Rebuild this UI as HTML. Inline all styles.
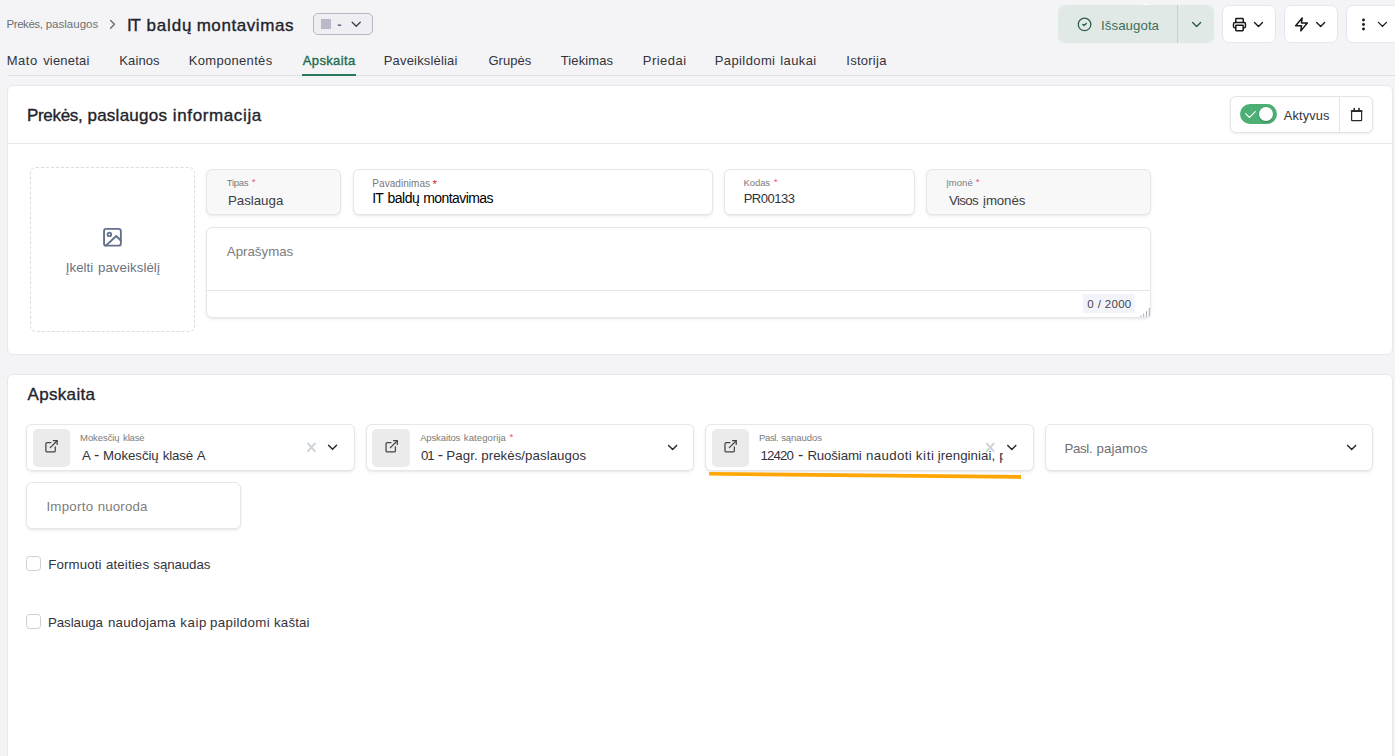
<!DOCTYPE html>
<html lang="lt">
<head>
<meta charset="utf-8">
<title>IT baldų montavimas</title>
<style>
html,body{margin:0;padding:0}
html{width:1395px;height:756px;overflow:hidden;background:#f4f4f7}
body{width:1395px;height:756px;overflow:hidden;background:#f4f4f7;font-family:"Liberation Sans",sans-serif;position:relative}
div,svg{box-sizing:border-box}
.page{position:absolute;left:0;top:0;width:1395px;height:756px;overflow:hidden;background:#f4f4f7}
.a{position:absolute}
.t{position:absolute;white-space:nowrap;line-height:1;font-weight:400}
.sw{-webkit-text-stroke:0.35px currentColor}
.b{font-weight:700}
.w{position:relative}
.clip{overflow:hidden;padding-top:4px}
.card{position:absolute;background:#fff;border:1px solid #e8e8eb;border-radius:6px}
.fld{position:absolute;background:#fff;border:1px solid #e7e7e8;border-radius:6px;box-shadow:0 1px 2px rgba(0,0,0,.06),0 2px 4px rgba(0,0,0,.04)}
.fld.dis{background:#f8f8f8}
.ib{position:absolute;background:#ebebeb;border-radius:5px}
.btn{position:absolute;background:#fff;border:1px solid #e3e6f1;border-radius:7px}
.ic{position:absolute;overflow:visible;stroke-linecap:round;stroke-linejoin:round}
.cb{position:absolute;width:15px;height:15px;background:#fff;border:1px solid #cfcfd1;border-radius:3.5px}
</style>
</head>
<body>
<div class="page">

<!-- ===== top bar ===== -->
<svg class="ic" fill="none" style="left:104px;top:16px" width="15.6" height="15.6" viewBox="-1.154 -0.846 24 24" stroke="#707074" stroke-width="2.3"><polyline points="9 18 15 12 9 6"/></svg>

<div class="a" style="left:313px;top:13px;width:60px;height:22px;background:#eeeef3;border:1px solid #b7b7c6;border-radius:5px"></div>
<div class="a" style="left:321px;top:19px;width:10px;height:10px;background:#b9b9c9"></div>
<svg class="ic" fill="none" style="left:348px;top:16px" width="16" height="16" viewBox="-0.300 -0.450 24 24" stroke="#3f3f46" stroke-width="2"><polyline points="6 9 12 15 18 9"/></svg>

<div class="a" style="left:7px;top:75px;width:1388px;height:1px;background:#e1e1e5"></div>
<div class="a" style="left:302px;top:74px;width:54px;height:2px;background:#2a7a5b"></div>

<!-- saved button -->
<div class="a" style="left:1143px;top:4px;width:4px;height:1px;background:#fff"></div>
<div class="a" style="left:1066px;top:4px;width:2px;height:1px;background:#fbfbfc"></div>
<div class="a" style="left:1058px;top:5px;width:156px;height:38px;background:#e0e9e6;border-radius:7px"></div>
<div class="a" style="left:1177px;top:5px;width:1px;height:38px;background:#c2d2cc"></div>
<svg class="ic" fill="none" style="left:1076px;top:16px" width="16" height="16" viewBox="-0.825 -0.600 24 24" stroke="#2c5e4a"><circle cx="12" cy="12" r="9.4" stroke-width="1.9"/><polyline points="9.4 12.2 11.1 13.6 14.6 10.6" stroke-width="2.2"/></svg>
<svg class="ic" fill="none" style="left:1188px;top:16px" width="16" height="16" viewBox="-0.975 -0.750 24 24" stroke="#2c5e4a" stroke-width="2"><polyline points="6 9 12 15 18 9"/></svg>

<!-- print -->
<div class="btn" style="left:1222px;top:5px;width:54px;height:38px"></div>
<svg class="ic" fill="none" style="left:1231px;top:16px" width="16" height="16" viewBox="-0.750 -0.825 24 24" stroke="#17171a" stroke-width="2.2"><path d="M17.6 17h1.4a2 2 0 0 0 2-2v-4a2 2 0 0 0-2-2H5a2 2 0 0 0-2 2v4a2 2 0 0 0 2 2h1.4"/><path d="M17.6 9V4a1 1 0 0 0-1-1H7.400a1 1 0 0 0-1 1v5"/><rect x="6.4" y="13" width="11.2" height="8.2" rx="1"/></svg>
<svg class="ic" fill="none" style="left:1250px;top:16px" width="16" height="16" viewBox="-0.750 -0.675 24 24" stroke="#17171a" stroke-width="2"><polyline points="6 9 12 15 18 9"/></svg>

<!-- bolt -->
<div class="btn" style="left:1284px;top:5px;width:54px;height:38px"></div>
<svg class="ic" fill="none" style="left:1293px;top:16px" width="15.6" height="15.6" viewBox="-1.077 -0.923 24 24" stroke="#17171a" stroke-width="2.3"><polygon points="13 2 3 14 12 14 11 22 21 10 12 10 13 2"/></svg>
<svg class="ic" fill="none" style="left:1312px;top:16px" width="16" height="16" viewBox="-0.975 -0.675 24 24" stroke="#17171a" stroke-width="2"><polyline points="6 9 12 15 18 9"/></svg>

<!-- more -->
<div class="btn" style="left:1346px;top:5px;width:54px;height:38px"></div>
<svg class="ic" style="left:1355px;top:16px" width="16" height="16" viewBox="-0.500 -0.500 16 16" stroke="none" fill="#17171a"><circle cx="8" cy="3.5" r="1.42"/><circle cx="8" cy="8" r="1.42"/><circle cx="8" cy="12.5" r="1.42"/></svg>
<svg class="ic" fill="none" style="left:1374px;top:16px" width="16" height="16" viewBox="-0.675 -0.600 24 24" stroke="#17171a" stroke-width="2"><polyline points="6 9 12 15 18 9"/></svg>

<!-- ===== card 1 ===== -->
<div class="card" style="left:7px;top:85px;width:1386px;height:270px"></div>
<div class="a" style="left:8px;top:143px;width:1384px;height:1px;background:#e8e8ea"></div>

<!-- active toggle group -->
<div class="a" style="left:1230px;top:96px;width:143px;height:37px;background:#fff;border:1px solid #e4e4e6;border-radius:6px;box-shadow:0 1px 3px rgba(0,0,0,.08)"></div>
<div class="a" style="left:1339px;top:97px;width:1px;height:35px;background:#e4e4e6"></div>
<div class="a" style="left:1240px;top:104px;width:37px;height:20px;background:#4caf73;border-radius:10px"></div>
<div class="a" style="left:1259px;top:107px;width:14px;height:14px;background:#fff;border-radius:50%;box-shadow:0 1px 2px rgba(0,0,0,.28)"></div>
<svg class="ic" fill="none" style="left:1240px;top:104px" width="37" height="20" viewBox="-0.000 -0.000 37 20" stroke="#fff" stroke-width="1.1"><polyline points="5.6 9.6 9.4 13.5 15.3 7.6"/></svg>
<svg class="ic" fill="none" style="left:1348px;top:106px" width="17" height="17" viewBox="-0.000 -0.000 17 17" stroke="#2b2b2e" stroke-width="1.2" stroke-linecap="butt"><rect x="3.6" y="4.6" width="10" height="10" rx="0.6"/><line x1="3.6" y1="5.1" x2="13.6" y2="5.1" stroke-width="1.9"/><line x1="6.2" y1="2.6" x2="6.2" y2="4.4" stroke-width="1.6"/><line x1="11" y1="2.6" x2="11" y2="4.4" stroke-width="1.6"/></svg>

<!-- upload -->
<div class="a" style="left:30px;top:167px;width:165px;height:165px;border:1px dashed #dcdcde;border-radius:6px;background:#fff"></div>
<svg class="ic" fill="none" style="left:101px;top:226px" width="22.4" height="22.4" viewBox="-0.268 -0.107 24 24" stroke="#64708a" stroke-width="2"><rect x="3" y="3" width="18" height="18" rx="2.4"/><circle cx="8.7" cy="8.9" r="1.9"/><polyline points="21 15.4 16 10.6 5 21"/></svg>

<!-- row 1 fields -->
<div class="fld dis" style="left:206px;top:169px;width:135px;height:46px"></div>
<div class="fld" style="left:353px;top:169px;width:360px;height:46px"></div>
<div class="fld" style="left:724px;top:169px;width:191px;height:46px"></div>
<div class="fld dis" style="left:926px;top:169px;width:225px;height:46px"></div>

<!-- textarea -->
<div class="fld" style="left:206px;top:227px;width:945px;height:91px"></div>
<div class="a" style="left:207px;top:290px;width:943px;height:1px;background:#e4e4e6"></div>
<div class="a" style="left:1083px;top:294px;width:52px;height:19px;background:#f2f4f9"></div>
<svg class="ic" fill="none" style="left:1138px;top:305px" width="13" height="12" viewBox="-0.300 -0.200 13 12" stroke="#8b8fa3" stroke-width="0.75" stroke-linecap="butt"><line x1="2.6" y1="10.6" x2="2.6" y2="11.4"/><line x1="5.4" y1="8.6" x2="5.4" y2="11.4"/><line x1="8.2" y1="6.4" x2="8.2" y2="11.2"/><line x1="11" y1="3.2" x2="11" y2="10.4"/></svg>

<!-- ===== card 2 ===== -->
<div class="card" style="left:7px;top:374px;width:1386px;height:400px"></div>

<!-- accounting row -->
<div class="fld" style="left:26px;top:424px;width:329px;height:47px"></div>
<div class="ib" style="left:33px;top:429px;width:37px;height:38px"></div>
<svg class="ic" fill="none" style="left:44px;top:438px" width="15" height="15" viewBox="-0.000 -1.360 24 24" stroke="#444448" stroke-width="2"><path d="M18 13v6a2 2 0 0 1-2 2H5a2 2 0 0 1-2-2V8a2 2 0 0 1 2-2h6"/><polyline points="15 3 21 3 21 9"/><line x1="10" y1="14" x2="21" y2="3"/></svg>
<svg class="ic" fill="none" style="left:306px;top:442px" width="10" height="10" viewBox="-0.500 -0.300 10 10" stroke="#cdd4da" stroke-width="1.9"><line x1="1.5" y1="1.2" x2="8.4" y2="8.9"/><line x1="8.4" y1="1.2" x2="1.5" y2="8.9"/></svg>
<svg class="ic" fill="none" style="left:324px;top:439px" width="16" height="16" viewBox="-0.825 -0.525 24 24" stroke="#2a2a2d" stroke-width="2.2"><polyline points="6 9 12 15 18 9"/></svg>

<div class="fld" style="left:366px;top:424px;width:328px;height:47px"></div>
<div class="ib" style="left:372px;top:429px;width:38px;height:38px"></div>
<svg class="ic" fill="none" style="left:384px;top:438px" width="15" height="15" viewBox="-0.240 -1.360 24 24" stroke="#444448" stroke-width="2"><path d="M18 13v6a2 2 0 0 1-2 2H5a2 2 0 0 1-2-2V8a2 2 0 0 1 2-2h6"/><polyline points="15 3 21 3 21 9"/><line x1="10" y1="14" x2="21" y2="3"/></svg>
<svg class="ic" fill="none" style="left:664px;top:439px" width="16" height="16" viewBox="-0.975 -0.600 24 24" stroke="#2a2a2d" stroke-width="2.2"><polyline points="6 9 12 15 18 9"/></svg>

<div class="fld" style="left:705px;top:424px;width:329px;height:47px"></div>
<div class="ib" style="left:712px;top:429px;width:37px;height:38px"></div>
<svg class="ic" fill="none" style="left:723px;top:438px" width="15" height="15" viewBox="-0.160 -1.360 24 24" stroke="#444448" stroke-width="2"><path d="M18 13v6a2 2 0 0 1-2 2H5a2 2 0 0 1-2-2V8a2 2 0 0 1 2-2h6"/><polyline points="15 3 21 3 21 9"/><line x1="10" y1="14" x2="21" y2="3"/></svg>
<svg class="ic" fill="none" style="left:985px;top:442px" width="10" height="10" viewBox="-0.300 -0.300 10 10" stroke="#cdd4da" stroke-width="1.9"><line x1="1.5" y1="1.2" x2="8.4" y2="8.9"/><line x1="8.4" y1="1.2" x2="1.5" y2="8.9"/></svg>
<svg class="ic" fill="none" style="left:1003px;top:439px" width="16" height="16" viewBox="-1.200 -0.600 24 24" stroke="#2a2a2d" stroke-width="2.2"><polyline points="6 9 12 15 18 9"/></svg>
<svg class="ic" style="left:705px;top:470px" width="320" height="10" viewBox="-0.000 -0.000 320 10" stroke="none" fill="#ffa602"><polygon points="4.1,2.0 316,5 316,8.9 4.1,5.6"/></svg>

<div class="fld" style="left:1045px;top:424px;width:328px;height:47px"></div>
<svg class="ic" fill="none" style="left:1343px;top:439px" width="16" height="16" viewBox="-0.975 -0.600 24 24" stroke="#2a2a2d" stroke-width="2.2"><polyline points="6 9 12 15 18 9"/></svg>

<div class="fld" style="left:26px;top:482px;width:215px;height:47px"></div>

<div class="cb" style="left:26px;top:556px"></div>
<div class="cb" style="left:26px;top:614px"></div>

<!-- ===== texts ===== -->
<div class="t" id="bc" style="left:4px;top:18.77px;font-size:11.5px;color:#6f6f73"><span class="w" id="bc.0" style="left:2.55px;letter-spacing:-0.445px">Prekės,</span> <span class="w" id="bc.1" style="left:2.64px;letter-spacing:0.006px">paslaugos</span></div>
<div class="t sw" id="title" style="left:125px;top:17.11px;font-size:17.0px;color:#23232b"><span class="w" id="title.0" style="left:1.88px;letter-spacing:-1.019px">IT</span> <span class="w" id="title.1" style="left:3.70px;letter-spacing:0.814px">baldų</span> <span class="w" id="title.2" style="left:3.42px;letter-spacing:0.574px">montavimas</span></div>
<div class="t b" id="dash" style="left:335px;top:18.00px;font-size:13.0px;color:#6a6a7e"><span class="w" id="dash.0" style="left:2.25px">-</span></div>
<div class="t" id="tab1" style="left:5px;top:54.20px;font-size:13.0px;color:#33333b"><span class="w" id="tab1.0" style="left:1.64px;letter-spacing:0.533px">Mato</span> <span class="w" id="tab1.1" style="left:3.47px;letter-spacing:0.197px">vienetai</span></div>
<div class="t" id="tab2" style="left:117px;top:54.20px;font-size:13.0px;color:#33333b"><span class="w" id="tab2.0" style="left:2.33px;letter-spacing:0.106px">Kainos</span></div>
<div class="t" id="tab3" style="left:187px;top:54.20px;font-size:13.0px;color:#33333b"><span class="w" id="tab3.0" style="left:1.72px;letter-spacing:0.319px">Komponentės</span></div>
<div class="t sw" id="tab4" style="left:300px;top:54.20px;font-size:13.0px;color:#216b4f"><span class="w" id="tab4.0" style="left:2.86px;letter-spacing:0.341px">Apskaita</span></div>
<div class="t" id="tab5" style="left:382px;top:54.20px;font-size:13.0px;color:#33333b"><span class="w" id="tab5.0" style="left:1.75px;letter-spacing:0.172px">Paveikslėliai</span></div>
<div class="t" id="tab6" style="left:486px;top:54.20px;font-size:13.0px;color:#33333b"><span class="w" id="tab6.0" style="left:2.47px;letter-spacing:0.022px">Grupės</span></div>
<div class="t" id="tab7" style="left:558px;top:54.20px;font-size:13.0px;color:#33333b"><span class="w" id="tab7.0" style="left:2.80px;letter-spacing:0.111px">Tiekimas</span></div>
<div class="t" id="tab8" style="left:641px;top:54.20px;font-size:13.0px;color:#33333b"><span class="w" id="tab8.0" style="left:1.75px;letter-spacing:0.495px">Priedai</span></div>
<div class="t" id="tab9" style="left:713px;top:54.20px;font-size:13.0px;color:#33333b"><span class="w" id="tab9.0" style="left:1.75px;letter-spacing:0.396px">Papildomi</span> <span class="w" id="tab9.1" style="left:3.00px;letter-spacing:0.392px">laukai</span></div>
<div class="t" id="tab10" style="left:845px;top:54.20px;font-size:13.0px;color:#33333b"><span class="w" id="tab10.0" style="left:1.31px;letter-spacing:0.255px">Istorija</span></div>
<div class="t" id="saved" style="left:1099px;top:19.14px;font-size:13.3px;color:#3d6e5b"><span class="w" id="saved.0" style="left:2.05px;letter-spacing:0.037px">Išsaugota</span></div>
<div class="t sw" id="h1" style="left:25px;top:106.91px;font-size:17.0px;color:#23232b"><span class="w" id="h1.0" style="left:2.00px;letter-spacing:-0.322px">Prekės,</span> <span class="w" id="h1.1" style="left:2.31px;letter-spacing:0.258px">paslaugos</span> <span class="w" id="h1.2" style="left:3.14px;letter-spacing:0.625px">informacija</span></div>
<div class="t" id="akt" style="left:1281px;top:109.66px;font-size:12.8px;color:#33333b"><span class="w" id="akt.0" style="left:2.69px;letter-spacing:0.155px">Aktyvus</span></div>
<div class="t" id="up" style="left:64px;top:260.74px;font-size:13.3px;color:#6b7382"><span class="w" id="up.0" style="left:1.81px;letter-spacing:0.022px">Įkelti</span> <span class="w" id="up.1" style="left:2.75px;letter-spacing:0.055px">paveikslėlį</span></div>
<div class="t" id="l_tip" style="left:224px;top:178.26px;font-size:9.5px;color:#7a7a7a"><span class="w" id="l_tip.0" style="left:2.86px;letter-spacing:-0.332px">Tipas</span></div>
<div class="t" id="a_tip" style="left:250px;top:177.16px;font-size:9.5px;color:#e2557f"><span class="w" id="a_tip.0" style="left:1.66px">*</span></div>
<div class="t" id="v_tip" style="left:226px;top:193.94px;font-size:13.3px;color:#3c3c44"><span class="w" id="v_tip.0" style="left:1.88px;letter-spacing:-0.004px">Paslauga</span></div>
<div class="t" id="l_pav" style="left:370px;top:178.84px;font-size:10.0px;color:#7a7a7a"><span class="w" id="l_pav.0" style="left:2.31px;letter-spacing:0.050px">Pavadinimas</span></div>
<div class="t" id="a_pav" style="left:430px;top:178.67px;font-size:11.5px;color:#d8232a"><span class="w" id="a_pav.0" style="left:2.55px">*</span></div>
<div class="t" id="v_pav" style="left:370px;top:191.15px;font-size:14.0px;color:#000000"><span class="w" id="v_pav.0" style="left:2.14px;letter-spacing:-0.722px">IT</span> <span class="w" id="v_pav.1" style="left:2.72px;letter-spacing:-0.536px">baldų</span> <span class="w" id="v_pav.2" style="left:2.89px;letter-spacing:-0.576px">montavimas</span></div>
<div class="t" id="l_kod" style="left:741px;top:178.06px;font-size:9.5px;color:#7a7a7a"><span class="w" id="l_kod.0" style="left:2.38px;letter-spacing:-0.051px">Kodas</span></div>
<div class="t" id="a_kod" style="left:771px;top:176.96px;font-size:9.5px;color:#e2557f"><span class="w" id="a_kod.0" style="left:2.77px">*</span></div>
<div class="t" id="v_kod" style="left:742px;top:192.00px;font-size:13.0px;color:#33333b"><span class="w" id="v_kod.0" style="left:1.64px;letter-spacing:-0.492px">PR00133</span></div>
<div class="t" id="l_imo" style="left:944px;top:178.06px;font-size:9.5px;color:#7a7a7a"><span class="w" id="l_imo.0" style="left:2.16px;letter-spacing:0.037px">Įmonė</span></div>
<div class="t" id="a_imo" style="left:974px;top:176.96px;font-size:9.5px;color:#e2557f"><span class="w" id="a_imo.0" style="left:1.69px">*</span></div>
<div class="t" id="v_imo" style="left:946px;top:193.94px;font-size:13.3px;color:#3c3c44"><span class="w" id="v_imo.0" style="left:3.03px;letter-spacing:-0.631px">Visos</span> <span class="w" id="v_imo.1" style="left:4.22px;letter-spacing:-0.118px">įmonės</span></div>
<div class="t" id="apr" style="left:224px;top:245.04px;font-size:13.3px;color:#7d7d7d"><span class="w" id="apr.0" style="left:2.77px;letter-spacing:-0.003px">Aprašymas</span></div>
<div class="t" id="cnt" style="left:1085px;top:298.77px;font-size:11.5px;color:#44444c"><span class="w" id="cnt.0" style="left:2.20px">0</span> <span class="w" id="cnt.1" style="left:3.14px">/</span> <span class="w" id="cnt.2" style="left:3.77px;letter-spacing:0.286px">2000</span></div>
<div class="t sw" id="h2" style="left:24px;top:385.81px;font-size:17.0px;color:#23232b"><span class="w" id="h2.0" style="left:3.47px;letter-spacing:0.336px">Apskaita</span></div>
<div class="t" id="l_mok" style="left:78px;top:433.26px;font-size:9.5px;color:#7a7a7a"><span class="w" id="l_mok.0" style="left:2.05px;letter-spacing:-0.079px">Mokesčių</span> <span class="w" id="l_mok.1" style="left:2.92px;letter-spacing:-0.148px">klasė</span></div>
<div class="t" id="v_mok" style="left:80px;top:449.14px;font-size:13.3px;color:#33333b"><span class="w" id="v_mok.0" style="left:2.05px">A</span> <span class="w" id="v_mok.1" style="left:2.23px;font-size:16px;line-height:0">-</span> <span class="w" id="v_mok.2" style="left:2.20px;letter-spacing:-0.065px">Mokesčių</span> <span class="w" id="v_mok.3" style="left:2.52px;letter-spacing:-0.150px">klasė</span> <span class="w" id="v_mok.4" style="left:3.33px">A</span></div>
<div class="t" id="l_aps" style="left:417px;top:433.06px;font-size:9.5px;color:#7a7a7a"><span class="w" id="l_aps.0" style="left:3.14px;letter-spacing:-0.124px">Apskaitos</span> <span class="w" id="l_aps.1" style="left:4.14px;letter-spacing:0.096px">kategorija</span></div>
<div class="t" id="a_aps" style="left:507px;top:431.96px;font-size:9.5px;color:#e2557f"><span class="w" id="a_aps.0" style="left:2.42px">*</span></div>
<div class="t" id="v_aps" style="left:419px;top:448.94px;font-size:13.3px;color:#33333b"><span class="w" id="v_aps.0" style="left:1.88px;letter-spacing:-0.931px">01</span> <span class="w" id="v_aps.1" style="left:2.03px;font-size:16px;line-height:0">-</span> <span class="w" id="v_aps.2" style="left:1.61px;letter-spacing:0.081px">Pagr.</span> <span class="w" id="v_aps.3" style="left:1.42px;letter-spacing:0.038px">prekės/paslaugos</span></div>
<div class="t" id="l_san" style="left:757px;top:433.26px;font-size:9.5px;color:#7a7a7a"><span class="w" id="l_san.0" style="left:2.05px;letter-spacing:-0.364px">Pasl.</span> <span class="w" id="l_san.1" style="left:2.20px;letter-spacing:-0.051px">sąnaudos</span></div>
<div class="t clip" id="v_san" style="left:759px;top:445.04px;width:244.20px;height:23.3px;font-size:13.3px;color:#33333b"><span class="w" id="v_san.0" style="left:1.55px;letter-spacing:-0.931px">12420</span> <span class="w" id="v_san.1" style="left:2.95px;font-size:16px;line-height:0">-</span> <span class="w" id="v_san.2" style="left:3.33px;letter-spacing:-0.141px">Ruošiami</span> <span class="w" id="v_san.3" style="left:3.88px;letter-spacing:0.372px">naudoti</span> <span class="w" id="v_san.4" style="left:3.84px;letter-spacing:0.601px">kiti</span> <span class="w" id="v_san.5" style="left:3.39px;letter-spacing:0.056px">įrenginiai,</span> <span class="w" id="v_san.6" style="left:3.66px;letter-spacing:1.096px">prietaisai</span></div>
<div class="t" id="v_paj" style="left:1063px;top:441.94px;font-size:13.3px;color:#6f6f73"><span class="w" id="v_paj.0" style="left:1.50px;letter-spacing:-0.366px">Pasl.</span> <span class="w" id="v_paj.1" style="left:2.00px;letter-spacing:0.114px">pajamos</span></div>
<div class="t" id="imp" style="left:44px;top:499.94px;font-size:13.3px;color:#7d7d7d"><span class="w" id="imp.0" style="left:2.38px;letter-spacing:0.276px">Importo</span> <span class="w" id="imp.1" style="left:3.03px;letter-spacing:0.143px">nuoroda</span></div>
<div class="t" id="cb1" style="left:46px;top:557.54px;font-size:13.3px;color:#33333b"><span class="w" id="cb1.0" style="left:2.25px;letter-spacing:0.112px">Formuoti</span> <span class="w" id="cb1.1" style="left:2.91px;letter-spacing:0.136px">ateities</span> <span class="w" id="cb1.2" style="left:3.39px;letter-spacing:-0.096px">sąnaudas</span></div>
<div class="t" id="cb2" style="left:46px;top:615.84px;font-size:13.3px;color:#33333b"><span class="w" id="cb2.0" style="left:1.91px;letter-spacing:-0.051px">Paslauga</span> <span class="w" id="cb2.1" style="left:3.19px;letter-spacing:0.239px">naudojama</span> <span class="w" id="cb2.2" style="left:3.84px;letter-spacing:0.568px">kaip</span> <span class="w" id="cb2.3" style="left:3.16px;letter-spacing:0.360px">papildomi</span> <span class="w" id="cb2.4" style="left:3.44px;letter-spacing:0.128px">kaštai</span></div>

</div>
</body>
</html>
